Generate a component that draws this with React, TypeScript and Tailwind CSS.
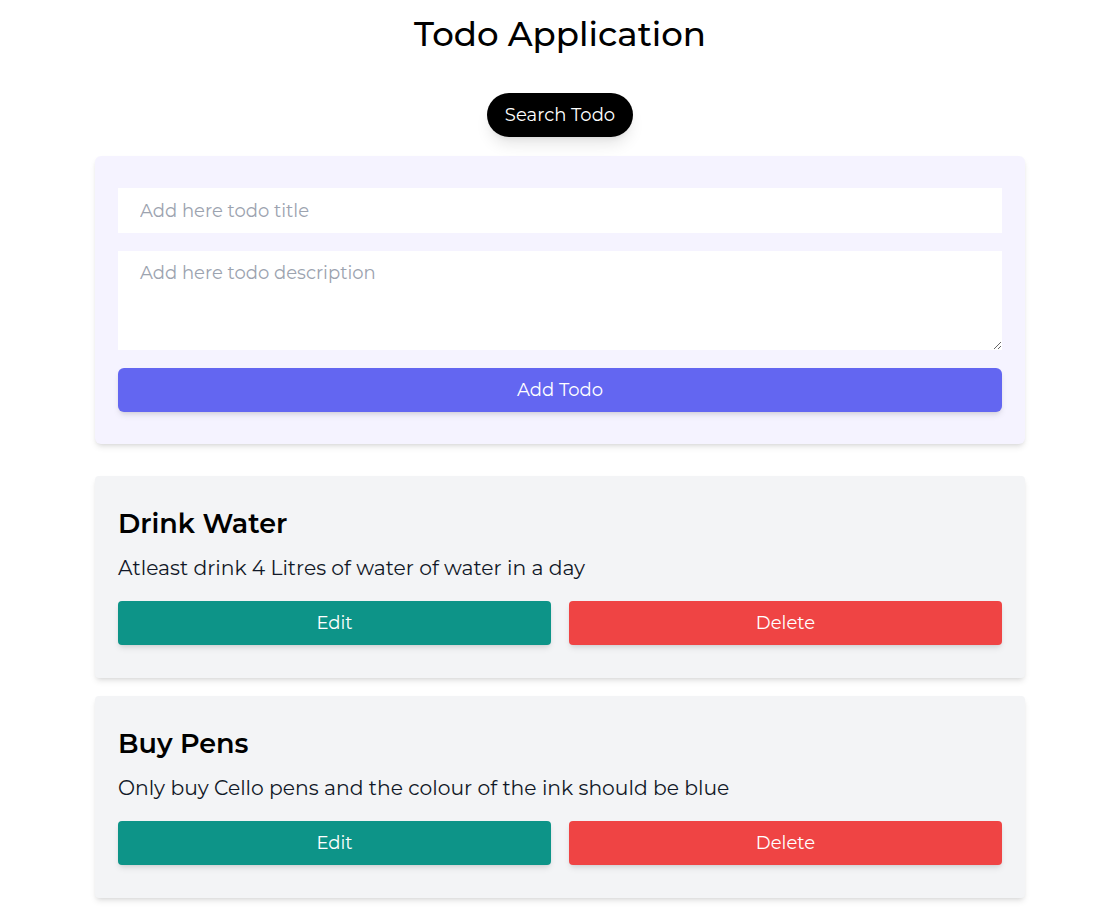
import React, { useState } from "react";

type Todo = {
    id: number;
    title: string;
    description: string;
};

const initialTodos: Todo[] = [
    {
        id: 1,
        title: "Drink Water",
        description: "Atleast drink 4 Litres of water of water in a day",
    },
    {
        id: 2,
        title: "Buy Pens",
        description: "Only buy Cello pens and the colour of the ink should be blue",
    },
];

const TodoCard: React.FC<{ todo: Todo; onDelete: (id: number) => void }> = ({
    todo,
    onDelete,
}) => {
    return (
        <div className="bg-[#f3f4f6] shadow-md rounded-sm px-[23px] pt-8 pb-[33px]">
            <h2 className="text-[27px] leading-8 font-semibold text-black">
                {todo.title}
            </h2>
            <p className="mt-[14px] text-[20.3px] leading-7 text-[#111827]">
                {todo.description}
            </p>
            <div className="mt-[19px] grid grid-cols-2 gap-[18px]">
                <button
                    type="button"
                    className="h-[44px] bg-[#0d9488] text-white text-lg rounded-sm shadow-md"
                >
                    Edit
                </button>
                <button
                    type="button"
                    onClick={() => onDelete(todo.id)}
                    className="h-[44px] bg-[#ef4444] text-white text-lg rounded-sm shadow-md"
                >
                    Delete
                </button>
            </div>
        </div>
    );
};

const App: React.FC = () => {
    const [todos, setTodos] = useState<Todo[]>(initialTodos);
    const [title, setTitle] = useState("");
    const [description, setDescription] = useState("");

    const addTodo = () => {
        if (!title) return;
        setTodos([...todos, { id: Date.now(), title, description }]);
        setTitle("");
        setDescription("");
    };

    return (
        <div
            className="min-h-screen bg-white pl-[18px] text-black"
            style={{ fontFamily: "Montserrat, Inter, 'Open Sans', sans-serif" }}
        >
            <div className="w-[930px] mx-auto">
                <h1 className="pt-[14px] text-[34px] leading-10 font-medium text-center">
                    Todo Application
                </h1>
                <div className="mt-[39px] flex justify-center">
                    <button
                        type="button"
                        className="h-[44px] px-[18px] bg-black text-white text-lg rounded-full shadow-lg"
                    >
                        Search Todo
                    </button>
                </div>

                <div className="mt-[19px] bg-[#f5f3ff] rounded-md shadow-md px-[23px] py-8 flex flex-col gap-[18px]">
                    <input
                        type="text"
                        value={title}
                        onChange={(e) => setTitle(e.target.value)}
                        placeholder="Add here todo title"
                        className="h-[45px] bg-white px-[22px] text-lg outline-none placeholder:text-[#9ca3af]"
                    />
                    <textarea
                        value={description}
                        onChange={(e) => setDescription(e.target.value)}
                        placeholder="Add here todo description"
                        className="h-[99px] bg-white px-[22px] py-[8px] text-lg outline-none placeholder:text-[#9ca3af]"
                    />
                    <button
                        type="button"
                        onClick={addTodo}
                        className="h-[44px] bg-[#6366f1] text-white text-lg rounded-md shadow-md"
                    >
                        Add Todo
                    </button>
                </div>

                <div className="mt-8 flex flex-col gap-[18px] pb-8">
                    {todos.map((todo) => (
                        <TodoCard
                            key={todo.id}
                            todo={todo}
                            onDelete={(id) =>
                                setTodos(todos.filter((t) => t.id !== id))
                            }
                        />
                    ))}
                </div>
            </div>
        </div>
    );
};

export default App;
